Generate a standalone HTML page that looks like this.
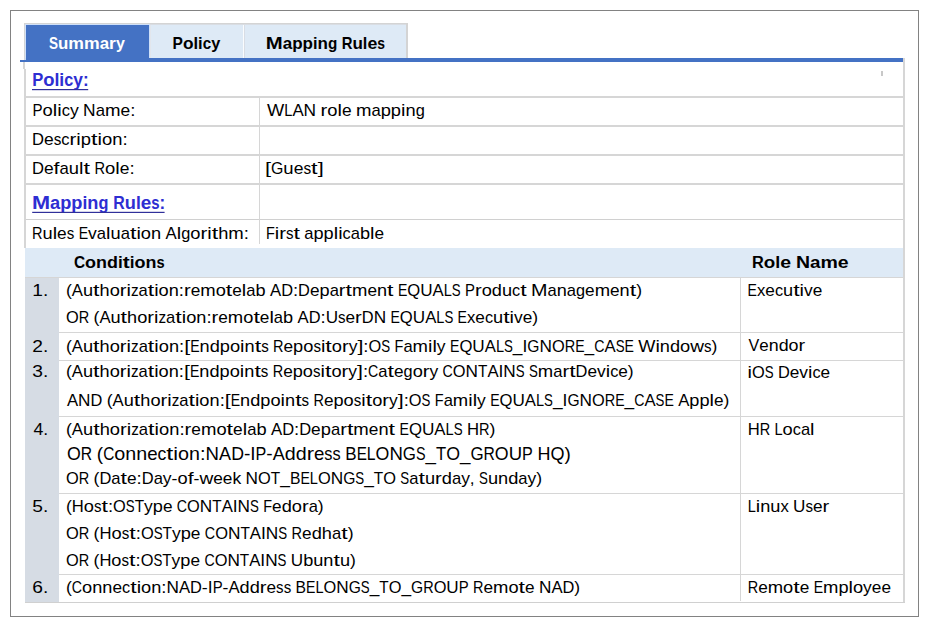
<!DOCTYPE html>
<html><head><meta charset="utf-8"><style>
html,body{margin:0;padding:0;background:#fff;width:927px;height:625px;overflow:hidden}
svg{display:block}
text{font-family:"Liberation Sans",sans-serif;white-space:pre}
</style></head><body>
<svg width="927" height="625" viewBox="0 0 927 625">
<g shape-rendering="crispEdges">
<rect x="10" y="10" width="909" height="1" fill="#828282"/>
<rect x="10" y="616" width="909" height="1" fill="#828282"/>
<rect x="10" y="10" width="1" height="607" fill="#828282"/>
<rect x="918" y="10" width="1" height="607" fill="#828282"/>
<rect x="24" y="23" width="384" height="1" fill="#D4D4D4"/>
<rect x="24" y="23" width="1" height="35" fill="#D4D4D4"/>
<rect x="406" y="23" width="2" height="35" fill="#D4D4D4"/>
<rect x="25" y="24" width="125" height="34" fill="#CFE0F8"/>
<rect x="26" y="25" width="123" height="33" fill="#4472C4"/>
<rect x="150" y="24" width="2" height="34" fill="#E2E6EC"/>
<rect x="151" y="24" width="255" height="34" fill="#DEEAF6"/>
<rect x="150" y="24" width="256" height="1" fill="#D9DDE3"/>
<rect x="243" y="25" width="1" height="33" fill="#FAFCFE"/>
<rect x="244" y="25" width="1" height="33" fill="#D8DDE5"/>
<rect x="26" y="58" width="877" height="4" fill="#4472C4"/>
<rect x="24" y="58" width="1" height="2" fill="#D0D4DC"/>
<rect x="25" y="58" width="1" height="2" fill="#C8DAF6"/>
<rect x="20" y="60" width="6" height="2" fill="#4472C4"/>
<rect x="23" y="62" width="2" height="7" fill="#D6D6D6"/>
<rect x="24" y="69" width="2" height="179" fill="#D6D6D6"/>
<rect x="903" y="58" width="2" height="545" fill="#D6D6D6"/>
<rect x="26" y="96" width="877" height="2" fill="#D6D6D6"/>
<rect x="26" y="125" width="877" height="2" fill="#D6D6D6"/>
<rect x="26" y="154" width="877" height="2" fill="#D6D6D6"/>
<rect x="26" y="183" width="877" height="2" fill="#D6D6D6"/>
<rect x="26" y="219" width="877" height="1" fill="#D0D0D0"/>
<rect x="259" y="98" width="1" height="146" fill="#D6D6D6"/>
<rect x="25" y="248" width="878" height="29" fill="#DEEAF6"/>
<rect x="25" y="277" width="878" height="1" fill="#D6D6D6"/>
<rect x="25" y="278" width="34" height="324" fill="#D6DCE4"/>
<rect x="59" y="332" width="844" height="1" fill="#D6D6D6"/>
<rect x="59" y="360" width="844" height="1" fill="#D6D6D6"/>
<rect x="59" y="416" width="844" height="1" fill="#D6D6D6"/>
<rect x="59" y="493" width="844" height="1" fill="#D6D6D6"/>
<rect x="59" y="574" width="844" height="1" fill="#D6D6D6"/>
<rect x="25" y="602" width="880" height="1" fill="#D0D0D0"/>
<rect x="740" y="278" width="1" height="323" fill="#D6D6D6"/>
<rect x="881" y="71" width="2" height="5" fill="#C8C8C8"/>
</g>
<g id="tab1" font-size="16.4" font-weight="bold" fill="#FFFFFF"><text x="48.99" y="48.50" textLength="9.02" lengthAdjust="spacingAndGlyphs">S</text><text x="58.01" y="48.50" textLength="10.31" lengthAdjust="spacingAndGlyphs">u</text><text x="68.32" y="48.50" textLength="15.68" lengthAdjust="spacingAndGlyphs">m</text><text x="84.00" y="48.50" textLength="15.68" lengthAdjust="spacingAndGlyphs">m</text><text x="99.68" y="48.50" textLength="9.40" lengthAdjust="spacingAndGlyphs">a</text><text x="109.08" y="48.50" textLength="6.84" lengthAdjust="spacingAndGlyphs">r</text><text x="115.92" y="48.50" textLength="8.88" lengthAdjust="spacingAndGlyphs">y</text></g>
<g id="tab2" font-size="16.4" font-weight="bold" fill="#000000"><text x="172.56" y="48.50" textLength="10.35" lengthAdjust="spacingAndGlyphs">P</text><text x="182.91" y="48.50" textLength="10.57" lengthAdjust="spacingAndGlyphs">o</text><text x="193.47" y="48.50" textLength="4.60" lengthAdjust="spacingAndGlyphs">l</text><text x="198.07" y="48.50" textLength="4.60" lengthAdjust="spacingAndGlyphs">i</text><text x="202.67" y="48.50" textLength="8.47" lengthAdjust="spacingAndGlyphs">c</text><text x="211.14" y="48.50" textLength="9.07" lengthAdjust="spacingAndGlyphs">y</text></g>
<g id="tab3" font-size="16.4" font-weight="bold" fill="#000000"><text x="265.77" y="48.50" textLength="16.93" lengthAdjust="spacingAndGlyphs">M</text><text x="282.70" y="48.50" textLength="9.48" lengthAdjust="spacingAndGlyphs">a</text><text x="292.18" y="48.50" textLength="10.40" lengthAdjust="spacingAndGlyphs">p</text><text x="302.58" y="48.50" textLength="10.40" lengthAdjust="spacingAndGlyphs">p</text><text x="312.98" y="48.50" textLength="4.54" lengthAdjust="spacingAndGlyphs">i</text><text x="317.53" y="48.50" textLength="10.40" lengthAdjust="spacingAndGlyphs">n</text><text x="327.93" y="48.50" textLength="9.32" lengthAdjust="spacingAndGlyphs">g</text><text x="341.72" y="48.50" textLength="10.75" lengthAdjust="spacingAndGlyphs">R</text><text x="352.47" y="48.50" textLength="10.40" lengthAdjust="spacingAndGlyphs">u</text><text x="362.87" y="48.50" textLength="4.54" lengthAdjust="spacingAndGlyphs">l</text><text x="367.41" y="48.50" textLength="9.85" lengthAdjust="spacingAndGlyphs">e</text><text x="377.26" y="48.50" textLength="7.74" lengthAdjust="spacingAndGlyphs">s</text></g>
<g id="h_policy" font-size="18.0" font-weight="bold" fill="#2E2ED2"><text x="32.14" y="85.50" textLength="11.03" lengthAdjust="spacingAndGlyphs">P</text><text x="43.18" y="85.50" textLength="11.26" lengthAdjust="spacingAndGlyphs">o</text><text x="54.44" y="85.50" textLength="4.90" lengthAdjust="spacingAndGlyphs">l</text><text x="59.34" y="85.50" textLength="4.90" lengthAdjust="spacingAndGlyphs">i</text><text x="64.24" y="85.50" textLength="9.03" lengthAdjust="spacingAndGlyphs">c</text><text x="73.27" y="85.50" textLength="9.67" lengthAdjust="spacingAndGlyphs">y</text><text x="82.94" y="85.50" textLength="5.72" lengthAdjust="spacingAndGlyphs">:</text></g>
<rect x="32.0" y="89.0" width="56.2" height="1.2" fill="#30309A"/>
<g id="pn" font-size="17" fill="#000000"><text x="32.47" y="116.00" textLength="10.05" lengthAdjust="spacingAndGlyphs">P</text><text x="42.52" y="116.00" textLength="10.26" lengthAdjust="spacingAndGlyphs">o</text><text x="52.78" y="116.00" textLength="4.46" lengthAdjust="spacingAndGlyphs">l</text><text x="57.24" y="116.00" textLength="4.46" lengthAdjust="spacingAndGlyphs">i</text><text x="61.70" y="116.00" textLength="8.22" lengthAdjust="spacingAndGlyphs">c</text><text x="69.93" y="116.00" textLength="8.80" lengthAdjust="spacingAndGlyphs">y</text><text x="83.13" y="116.00" textLength="12.55" lengthAdjust="spacingAndGlyphs">N</text><text x="95.68" y="116.00" textLength="9.32" lengthAdjust="spacingAndGlyphs">a</text><text x="105.00" y="116.00" textLength="15.54" lengthAdjust="spacingAndGlyphs">m</text><text x="120.53" y="116.00" textLength="9.68" lengthAdjust="spacingAndGlyphs">e</text><text x="130.21" y="116.00" textLength="5.20" lengthAdjust="spacingAndGlyphs">:</text></g>
<g id="pn_v" font-size="17" fill="#000000"><text x="267.00" y="115.70" textLength="17.24" lengthAdjust="spacingAndGlyphs">W</text><text x="284.24" y="115.70" textLength="8.15" lengthAdjust="spacingAndGlyphs">L</text><text x="292.38" y="115.70" textLength="11.21" lengthAdjust="spacingAndGlyphs">A</text><text x="303.59" y="115.70" textLength="12.51" lengthAdjust="spacingAndGlyphs">N</text><text x="320.48" y="115.70" textLength="6.75" lengthAdjust="spacingAndGlyphs">r</text><text x="327.23" y="115.70" textLength="10.22" lengthAdjust="spacingAndGlyphs">o</text><text x="337.45" y="115.70" textLength="4.45" lengthAdjust="spacingAndGlyphs">l</text><text x="341.90" y="115.70" textLength="9.64" lengthAdjust="spacingAndGlyphs">e</text><text x="355.92" y="115.70" textLength="15.48" lengthAdjust="spacingAndGlyphs">m</text><text x="371.39" y="115.70" textLength="9.28" lengthAdjust="spacingAndGlyphs">a</text><text x="380.67" y="115.70" textLength="10.18" lengthAdjust="spacingAndGlyphs">p</text><text x="390.85" y="115.70" textLength="10.18" lengthAdjust="spacingAndGlyphs">p</text><text x="401.03" y="115.70" textLength="4.45" lengthAdjust="spacingAndGlyphs">i</text><text x="405.48" y="115.70" textLength="10.18" lengthAdjust="spacingAndGlyphs">n</text><text x="415.66" y="115.70" textLength="9.12" lengthAdjust="spacingAndGlyphs">g</text></g>
<g id="desc" font-size="17" fill="#000000"><text x="31.98" y="145.30" textLength="11.97" lengthAdjust="spacingAndGlyphs">D</text><text x="43.95" y="145.30" textLength="9.68" lengthAdjust="spacingAndGlyphs">e</text><text x="53.64" y="145.30" textLength="7.61" lengthAdjust="spacingAndGlyphs">s</text><text x="61.25" y="145.30" textLength="8.23" lengthAdjust="spacingAndGlyphs">c</text><text x="69.48" y="145.30" textLength="6.79" lengthAdjust="spacingAndGlyphs">r</text><text x="76.26" y="145.30" textLength="4.47" lengthAdjust="spacingAndGlyphs">i</text><text x="80.73" y="145.30" textLength="10.23" lengthAdjust="spacingAndGlyphs">p</text><text x="90.96" y="145.30" textLength="6.52" lengthAdjust="spacingAndGlyphs">t</text><text x="97.48" y="145.30" textLength="4.47" lengthAdjust="spacingAndGlyphs">i</text><text x="101.94" y="145.30" textLength="10.26" lengthAdjust="spacingAndGlyphs">o</text><text x="112.21" y="145.30" textLength="10.23" lengthAdjust="spacingAndGlyphs">n</text><text x="122.43" y="145.30" textLength="5.21" lengthAdjust="spacingAndGlyphs">:</text></g>
<g id="dr" font-size="17" fill="#000000"><text x="31.96" y="174.00" textLength="11.97" lengthAdjust="spacingAndGlyphs">D</text><text x="43.93" y="174.00" textLength="9.68" lengthAdjust="spacingAndGlyphs">e</text><text x="53.61" y="174.00" textLength="5.94" lengthAdjust="spacingAndGlyphs">f</text><text x="59.54" y="174.00" textLength="9.32" lengthAdjust="spacingAndGlyphs">a</text><text x="68.86" y="174.00" textLength="10.22" lengthAdjust="spacingAndGlyphs">u</text><text x="79.08" y="174.00" textLength="4.46" lengthAdjust="spacingAndGlyphs">l</text><text x="83.55" y="174.00" textLength="6.52" lengthAdjust="spacingAndGlyphs">t</text><text x="94.46" y="174.00" textLength="10.56" lengthAdjust="spacingAndGlyphs">R</text><text x="105.02" y="174.00" textLength="10.26" lengthAdjust="spacingAndGlyphs">o</text><text x="115.28" y="174.00" textLength="4.46" lengthAdjust="spacingAndGlyphs">l</text><text x="119.74" y="174.00" textLength="9.68" lengthAdjust="spacingAndGlyphs">e</text><text x="129.42" y="174.00" textLength="5.20" lengthAdjust="spacingAndGlyphs">:</text></g>
<g id="dr_v" font-size="17" fill="#000000"><text x="264.97" y="174.00" textLength="6.05" lengthAdjust="spacingAndGlyphs">[</text><text x="271.02" y="174.00" textLength="12.37" lengthAdjust="spacingAndGlyphs">G</text><text x="283.39" y="174.00" textLength="10.30" lengthAdjust="spacingAndGlyphs">u</text><text x="293.69" y="174.00" textLength="9.76" lengthAdjust="spacingAndGlyphs">e</text><text x="303.45" y="174.00" textLength="7.67" lengthAdjust="spacingAndGlyphs">s</text><text x="311.12" y="174.00" textLength="6.57" lengthAdjust="spacingAndGlyphs">t</text><text x="317.68" y="174.00" textLength="6.05" lengthAdjust="spacingAndGlyphs">]</text></g>
<g id="h_map" font-size="18.0" font-weight="bold" fill="#2E2ED2"><text x="31.98" y="208.80" textLength="18.11" lengthAdjust="spacingAndGlyphs">M</text><text x="50.09" y="208.80" textLength="10.15" lengthAdjust="spacingAndGlyphs">a</text><text x="60.24" y="208.80" textLength="11.13" lengthAdjust="spacingAndGlyphs">p</text><text x="71.37" y="208.80" textLength="11.13" lengthAdjust="spacingAndGlyphs">p</text><text x="82.50" y="208.80" textLength="4.86" lengthAdjust="spacingAndGlyphs">i</text><text x="87.36" y="208.80" textLength="11.13" lengthAdjust="spacingAndGlyphs">n</text><text x="98.49" y="208.80" textLength="9.97" lengthAdjust="spacingAndGlyphs">g</text><text x="113.25" y="208.80" textLength="11.50" lengthAdjust="spacingAndGlyphs">R</text><text x="124.75" y="208.80" textLength="11.13" lengthAdjust="spacingAndGlyphs">u</text><text x="135.88" y="208.80" textLength="4.86" lengthAdjust="spacingAndGlyphs">l</text><text x="140.74" y="208.80" textLength="10.54" lengthAdjust="spacingAndGlyphs">e</text><text x="151.28" y="208.80" textLength="8.29" lengthAdjust="spacingAndGlyphs">s</text><text x="159.57" y="208.80" textLength="5.67" lengthAdjust="spacingAndGlyphs">:</text></g>
<rect x="32.2" y="211.8" width="132.4" height="1.2" fill="#30309A"/>
<g id="rea" font-size="17" fill="#000000"><text x="32.00" y="238.60" textLength="10.50" lengthAdjust="spacingAndGlyphs">R</text><text x="42.50" y="238.60" textLength="10.16" lengthAdjust="spacingAndGlyphs">u</text><text x="52.66" y="238.60" textLength="4.44" lengthAdjust="spacingAndGlyphs">l</text><text x="57.10" y="238.60" textLength="9.62" lengthAdjust="spacingAndGlyphs">e</text><text x="66.72" y="238.60" textLength="7.56" lengthAdjust="spacingAndGlyphs">s</text><text x="78.66" y="238.60" textLength="9.44" lengthAdjust="spacingAndGlyphs">E</text><text x="88.10" y="238.60" textLength="8.74" lengthAdjust="spacingAndGlyphs">v</text><text x="96.84" y="238.60" textLength="9.26" lengthAdjust="spacingAndGlyphs">a</text><text x="106.10" y="238.60" textLength="4.44" lengthAdjust="spacingAndGlyphs">l</text><text x="110.54" y="238.60" textLength="10.16" lengthAdjust="spacingAndGlyphs">u</text><text x="120.70" y="238.60" textLength="9.26" lengthAdjust="spacingAndGlyphs">a</text><text x="129.96" y="238.60" textLength="6.48" lengthAdjust="spacingAndGlyphs">t</text><text x="136.44" y="238.60" textLength="4.44" lengthAdjust="spacingAndGlyphs">i</text><text x="140.88" y="238.60" textLength="10.20" lengthAdjust="spacingAndGlyphs">o</text><text x="151.08" y="238.60" textLength="10.16" lengthAdjust="spacingAndGlyphs">n</text><text x="165.61" y="238.60" textLength="11.19" lengthAdjust="spacingAndGlyphs">A</text><text x="176.81" y="238.60" textLength="4.44" lengthAdjust="spacingAndGlyphs">l</text><text x="181.24" y="238.60" textLength="9.10" lengthAdjust="spacingAndGlyphs">g</text><text x="190.35" y="238.60" textLength="10.20" lengthAdjust="spacingAndGlyphs">o</text><text x="200.55" y="238.60" textLength="6.74" lengthAdjust="spacingAndGlyphs">r</text><text x="207.29" y="238.60" textLength="4.44" lengthAdjust="spacingAndGlyphs">i</text><text x="211.73" y="238.60" textLength="6.48" lengthAdjust="spacingAndGlyphs">t</text><text x="218.21" y="238.60" textLength="10.16" lengthAdjust="spacingAndGlyphs">h</text><text x="228.37" y="238.60" textLength="15.45" lengthAdjust="spacingAndGlyphs">m</text><text x="243.82" y="238.60" textLength="5.18" lengthAdjust="spacingAndGlyphs">:</text></g>
<g id="rea_v" font-size="17" fill="#000000"><text x="266.00" y="238.60" textLength="8.85" lengthAdjust="spacingAndGlyphs">F</text><text x="274.85" y="238.60" textLength="4.42" lengthAdjust="spacingAndGlyphs">i</text><text x="279.26" y="238.60" textLength="6.71" lengthAdjust="spacingAndGlyphs">r</text><text x="285.98" y="238.60" textLength="7.53" lengthAdjust="spacingAndGlyphs">s</text><text x="293.51" y="238.60" textLength="6.45" lengthAdjust="spacingAndGlyphs">t</text><text x="304.31" y="238.60" textLength="9.22" lengthAdjust="spacingAndGlyphs">a</text><text x="313.53" y="238.60" textLength="10.11" lengthAdjust="spacingAndGlyphs">p</text><text x="323.64" y="238.60" textLength="10.11" lengthAdjust="spacingAndGlyphs">p</text><text x="333.76" y="238.60" textLength="4.42" lengthAdjust="spacingAndGlyphs">l</text><text x="338.17" y="238.60" textLength="4.42" lengthAdjust="spacingAndGlyphs">i</text><text x="342.59" y="238.60" textLength="8.14" lengthAdjust="spacingAndGlyphs">c</text><text x="350.73" y="238.60" textLength="9.22" lengthAdjust="spacingAndGlyphs">a</text><text x="359.96" y="238.60" textLength="10.11" lengthAdjust="spacingAndGlyphs">b</text><text x="370.07" y="238.60" textLength="4.42" lengthAdjust="spacingAndGlyphs">l</text><text x="374.49" y="238.60" textLength="9.58" lengthAdjust="spacingAndGlyphs">e</text></g>
<g id="h_cond" font-size="17.4" font-weight="bold" fill="#000000"><text x="73.99" y="267.70" textLength="11.11" lengthAdjust="spacingAndGlyphs">C</text><text x="85.10" y="267.70" textLength="10.99" lengthAdjust="spacingAndGlyphs">o</text><text x="96.09" y="267.70" textLength="10.95" lengthAdjust="spacingAndGlyphs">n</text><text x="107.04" y="267.70" textLength="10.95" lengthAdjust="spacingAndGlyphs">d</text><text x="117.98" y="267.70" textLength="4.78" lengthAdjust="spacingAndGlyphs">i</text><text x="122.76" y="267.70" textLength="6.98" lengthAdjust="spacingAndGlyphs">t</text><text x="129.74" y="267.70" textLength="4.78" lengthAdjust="spacingAndGlyphs">i</text><text x="134.53" y="267.70" textLength="10.99" lengthAdjust="spacingAndGlyphs">o</text><text x="145.51" y="267.70" textLength="10.95" lengthAdjust="spacingAndGlyphs">n</text><text x="156.46" y="267.70" textLength="8.15" lengthAdjust="spacingAndGlyphs">s</text></g>
<g id="h_role" font-size="17.4" font-weight="bold" fill="#000000"><text x="751.96" y="267.70" textLength="11.81" lengthAdjust="spacingAndGlyphs">R</text><text x="763.77" y="267.70" textLength="11.47" lengthAdjust="spacingAndGlyphs">o</text><text x="775.24" y="267.70" textLength="4.99" lengthAdjust="spacingAndGlyphs">l</text><text x="780.23" y="267.70" textLength="10.82" lengthAdjust="spacingAndGlyphs">e</text><text x="795.97" y="267.70" textLength="14.04" lengthAdjust="spacingAndGlyphs">N</text><text x="810.01" y="267.70" textLength="10.42" lengthAdjust="spacingAndGlyphs">a</text><text x="820.43" y="267.70" textLength="17.37" lengthAdjust="spacingAndGlyphs">m</text><text x="837.80" y="267.70" textLength="10.82" lengthAdjust="spacingAndGlyphs">e</text></g>
<g id="n1" font-size="17" fill="#000000"><text x="32.28" y="296.00" textLength="10.69" lengthAdjust="spacingAndGlyphs">1</text><text x="42.97" y="296.00" textLength="5.32" lengthAdjust="spacingAndGlyphs">.</text></g>
<g id="n2" font-size="17" fill="#000000"><text x="32.33" y="351.50" textLength="10.69" lengthAdjust="spacingAndGlyphs">2</text><text x="43.01" y="351.50" textLength="5.32" lengthAdjust="spacingAndGlyphs">.</text></g>
<g id="n3" font-size="17" fill="#000000"><text x="32.33" y="377.30" textLength="10.69" lengthAdjust="spacingAndGlyphs">3</text><text x="43.01" y="377.30" textLength="5.32" lengthAdjust="spacingAndGlyphs">.</text></g>
<g id="n4" font-size="17" fill="#000000"><text x="33.42" y="434.50" textLength="9.86" lengthAdjust="spacingAndGlyphs">4</text><text x="43.28" y="434.50" textLength="4.91" lengthAdjust="spacingAndGlyphs">.</text></g>
<g id="n5" font-size="17" fill="#000000"><text x="32.28" y="512.00" textLength="10.69" lengthAdjust="spacingAndGlyphs">5</text><text x="42.96" y="512.00" textLength="5.32" lengthAdjust="spacingAndGlyphs">.</text></g>
<g id="n6" font-size="17" fill="#000000"><text x="32.33" y="592.60" textLength="10.69" lengthAdjust="spacingAndGlyphs">6</text><text x="43.01" y="592.60" textLength="5.32" lengthAdjust="spacingAndGlyphs">.</text></g>
<g id="c11" font-size="17" fill="#000000"><text x="66.00" y="296.00" textLength="5.84" lengthAdjust="spacingAndGlyphs">(</text><text x="71.84" y="296.00" textLength="11.14" lengthAdjust="spacingAndGlyphs">A</text><text x="82.98" y="296.00" textLength="10.11" lengthAdjust="spacingAndGlyphs">u</text><text x="93.09" y="296.00" textLength="6.45" lengthAdjust="spacingAndGlyphs">t</text><text x="99.54" y="296.00" textLength="10.11" lengthAdjust="spacingAndGlyphs">h</text><text x="109.65" y="296.00" textLength="10.15" lengthAdjust="spacingAndGlyphs">o</text><text x="119.80" y="296.00" textLength="6.71" lengthAdjust="spacingAndGlyphs">r</text><text x="126.51" y="296.00" textLength="4.42" lengthAdjust="spacingAndGlyphs">i</text><text x="130.93" y="296.00" textLength="7.60" lengthAdjust="spacingAndGlyphs">z</text><text x="138.54" y="296.00" textLength="9.22" lengthAdjust="spacingAndGlyphs">a</text><text x="147.76" y="296.00" textLength="6.45" lengthAdjust="spacingAndGlyphs">t</text><text x="154.20" y="296.00" textLength="4.42" lengthAdjust="spacingAndGlyphs">i</text><text x="158.62" y="296.00" textLength="10.15" lengthAdjust="spacingAndGlyphs">o</text><text x="168.77" y="296.00" textLength="10.11" lengthAdjust="spacingAndGlyphs">n</text><text x="178.89" y="296.00" textLength="5.15" lengthAdjust="spacingAndGlyphs">:</text><text x="184.04" y="296.00" textLength="6.71" lengthAdjust="spacingAndGlyphs">r</text><text x="190.75" y="296.00" textLength="9.58" lengthAdjust="spacingAndGlyphs">e</text><text x="200.33" y="296.00" textLength="15.38" lengthAdjust="spacingAndGlyphs">m</text><text x="215.71" y="296.00" textLength="10.15" lengthAdjust="spacingAndGlyphs">o</text><text x="225.86" y="296.00" textLength="6.45" lengthAdjust="spacingAndGlyphs">t</text><text x="232.30" y="296.00" textLength="9.58" lengthAdjust="spacingAndGlyphs">e</text><text x="241.88" y="296.00" textLength="4.42" lengthAdjust="spacingAndGlyphs">l</text><text x="246.30" y="296.00" textLength="9.22" lengthAdjust="spacingAndGlyphs">a</text><text x="255.52" y="296.00" textLength="10.11" lengthAdjust="spacingAndGlyphs">b</text><text x="269.99" y="296.00" textLength="11.14" lengthAdjust="spacingAndGlyphs">A</text><text x="281.13" y="296.00" textLength="11.84" lengthAdjust="spacingAndGlyphs">D</text><text x="292.97" y="296.00" textLength="5.15" lengthAdjust="spacingAndGlyphs">:</text><text x="298.12" y="296.00" textLength="11.84" lengthAdjust="spacingAndGlyphs">D</text><text x="309.96" y="296.00" textLength="9.58" lengthAdjust="spacingAndGlyphs">e</text><text x="319.54" y="296.00" textLength="10.11" lengthAdjust="spacingAndGlyphs">p</text><text x="329.65" y="296.00" textLength="9.22" lengthAdjust="spacingAndGlyphs">a</text><text x="338.88" y="296.00" textLength="6.71" lengthAdjust="spacingAndGlyphs">r</text><text x="345.59" y="296.00" textLength="6.45" lengthAdjust="spacingAndGlyphs">t</text><text x="352.03" y="296.00" textLength="15.38" lengthAdjust="spacingAndGlyphs">m</text><text x="367.41" y="296.00" textLength="9.58" lengthAdjust="spacingAndGlyphs">e</text><text x="376.99" y="296.00" textLength="10.11" lengthAdjust="spacingAndGlyphs">n</text><text x="387.10" y="296.00" textLength="6.45" lengthAdjust="spacingAndGlyphs">t</text><text x="397.90" y="296.00" textLength="9.40" lengthAdjust="spacingAndGlyphs">E</text><text x="407.30" y="296.00" textLength="12.95" lengthAdjust="spacingAndGlyphs">Q</text><text x="420.26" y="296.00" textLength="12.35" lengthAdjust="spacingAndGlyphs">U</text><text x="432.61" y="296.00" textLength="11.14" lengthAdjust="spacingAndGlyphs">A</text><text x="443.75" y="296.00" textLength="8.09" lengthAdjust="spacingAndGlyphs">L</text><text x="451.84" y="296.00" textLength="8.84" lengthAdjust="spacingAndGlyphs">S</text><text x="465.04" y="296.00" textLength="9.94" lengthAdjust="spacingAndGlyphs">P</text><text x="474.98" y="296.00" textLength="6.71" lengthAdjust="spacingAndGlyphs">r</text><text x="481.69" y="296.00" textLength="10.15" lengthAdjust="spacingAndGlyphs">o</text><text x="491.84" y="296.00" textLength="10.11" lengthAdjust="spacingAndGlyphs">d</text><text x="501.96" y="296.00" textLength="10.11" lengthAdjust="spacingAndGlyphs">u</text><text x="512.07" y="296.00" textLength="8.14" lengthAdjust="spacingAndGlyphs">c</text><text x="520.21" y="296.00" textLength="6.45" lengthAdjust="spacingAndGlyphs">t</text><text x="531.01" y="296.00" textLength="16.46" lengthAdjust="spacingAndGlyphs">M</text><text x="547.47" y="296.00" textLength="9.22" lengthAdjust="spacingAndGlyphs">a</text><text x="556.69" y="296.00" textLength="10.11" lengthAdjust="spacingAndGlyphs">n</text><text x="566.80" y="296.00" textLength="9.22" lengthAdjust="spacingAndGlyphs">a</text><text x="576.02" y="296.00" textLength="9.06" lengthAdjust="spacingAndGlyphs">g</text><text x="585.08" y="296.00" textLength="9.58" lengthAdjust="spacingAndGlyphs">e</text><text x="594.66" y="296.00" textLength="15.38" lengthAdjust="spacingAndGlyphs">m</text><text x="610.04" y="296.00" textLength="9.58" lengthAdjust="spacingAndGlyphs">e</text><text x="619.62" y="296.00" textLength="10.11" lengthAdjust="spacingAndGlyphs">n</text><text x="629.73" y="296.00" textLength="6.45" lengthAdjust="spacingAndGlyphs">t</text><text x="636.18" y="296.00" textLength="5.84" lengthAdjust="spacingAndGlyphs">)</text></g>
<g id="c12" font-size="17" fill="#000000"><text x="66.00" y="322.80" textLength="12.75" lengthAdjust="spacingAndGlyphs">O</text><text x="78.75" y="322.80" textLength="10.45" lengthAdjust="spacingAndGlyphs">R</text><text x="93.55" y="322.80" textLength="5.84" lengthAdjust="spacingAndGlyphs">(</text><text x="99.39" y="322.80" textLength="11.14" lengthAdjust="spacingAndGlyphs">A</text><text x="110.53" y="322.80" textLength="10.11" lengthAdjust="spacingAndGlyphs">u</text><text x="120.64" y="322.80" textLength="6.45" lengthAdjust="spacingAndGlyphs">t</text><text x="127.09" y="322.80" textLength="10.11" lengthAdjust="spacingAndGlyphs">h</text><text x="137.20" y="322.80" textLength="10.15" lengthAdjust="spacingAndGlyphs">o</text><text x="147.35" y="322.80" textLength="6.71" lengthAdjust="spacingAndGlyphs">r</text><text x="154.06" y="322.80" textLength="4.42" lengthAdjust="spacingAndGlyphs">i</text><text x="158.48" y="322.80" textLength="7.60" lengthAdjust="spacingAndGlyphs">z</text><text x="166.09" y="322.80" textLength="9.22" lengthAdjust="spacingAndGlyphs">a</text><text x="175.31" y="322.80" textLength="6.45" lengthAdjust="spacingAndGlyphs">t</text><text x="181.75" y="322.80" textLength="4.42" lengthAdjust="spacingAndGlyphs">i</text><text x="186.17" y="322.80" textLength="10.15" lengthAdjust="spacingAndGlyphs">o</text><text x="196.32" y="322.80" textLength="10.11" lengthAdjust="spacingAndGlyphs">n</text><text x="206.44" y="322.80" textLength="5.15" lengthAdjust="spacingAndGlyphs">:</text><text x="211.59" y="322.80" textLength="6.71" lengthAdjust="spacingAndGlyphs">r</text><text x="218.30" y="322.80" textLength="9.58" lengthAdjust="spacingAndGlyphs">e</text><text x="227.88" y="322.80" textLength="15.38" lengthAdjust="spacingAndGlyphs">m</text><text x="243.25" y="322.80" textLength="10.15" lengthAdjust="spacingAndGlyphs">o</text><text x="253.41" y="322.80" textLength="6.45" lengthAdjust="spacingAndGlyphs">t</text><text x="259.85" y="322.80" textLength="9.58" lengthAdjust="spacingAndGlyphs">e</text><text x="269.43" y="322.80" textLength="4.42" lengthAdjust="spacingAndGlyphs">l</text><text x="273.85" y="322.80" textLength="9.22" lengthAdjust="spacingAndGlyphs">a</text><text x="283.07" y="322.80" textLength="10.11" lengthAdjust="spacingAndGlyphs">b</text><text x="297.54" y="322.80" textLength="11.14" lengthAdjust="spacingAndGlyphs">A</text><text x="308.68" y="322.80" textLength="11.84" lengthAdjust="spacingAndGlyphs">D</text><text x="320.52" y="322.80" textLength="5.15" lengthAdjust="spacingAndGlyphs">:</text><text x="325.67" y="322.80" textLength="12.35" lengthAdjust="spacingAndGlyphs">U</text><text x="338.02" y="322.80" textLength="7.53" lengthAdjust="spacingAndGlyphs">s</text><text x="345.55" y="322.80" textLength="9.58" lengthAdjust="spacingAndGlyphs">e</text><text x="355.13" y="322.80" textLength="6.71" lengthAdjust="spacingAndGlyphs">r</text><text x="361.84" y="322.80" textLength="11.84" lengthAdjust="spacingAndGlyphs">D</text><text x="373.68" y="322.80" textLength="12.43" lengthAdjust="spacingAndGlyphs">N</text><text x="390.46" y="322.80" textLength="9.40" lengthAdjust="spacingAndGlyphs">E</text><text x="399.86" y="322.80" textLength="12.95" lengthAdjust="spacingAndGlyphs">Q</text><text x="412.81" y="322.80" textLength="12.35" lengthAdjust="spacingAndGlyphs">U</text><text x="425.16" y="322.80" textLength="11.14" lengthAdjust="spacingAndGlyphs">A</text><text x="436.30" y="322.80" textLength="8.09" lengthAdjust="spacingAndGlyphs">L</text><text x="444.39" y="322.80" textLength="8.84" lengthAdjust="spacingAndGlyphs">S</text><text x="457.59" y="322.80" textLength="9.40" lengthAdjust="spacingAndGlyphs">E</text><text x="466.99" y="322.80" textLength="8.34" lengthAdjust="spacingAndGlyphs">x</text><text x="475.33" y="322.80" textLength="9.58" lengthAdjust="spacingAndGlyphs">e</text><text x="484.91" y="322.80" textLength="8.14" lengthAdjust="spacingAndGlyphs">c</text><text x="493.05" y="322.80" textLength="10.11" lengthAdjust="spacingAndGlyphs">u</text><text x="503.16" y="322.80" textLength="6.45" lengthAdjust="spacingAndGlyphs">t</text><text x="509.61" y="322.80" textLength="4.42" lengthAdjust="spacingAndGlyphs">i</text><text x="514.03" y="322.80" textLength="8.69" lengthAdjust="spacingAndGlyphs">v</text><text x="522.72" y="322.80" textLength="9.58" lengthAdjust="spacingAndGlyphs">e</text><text x="532.30" y="322.80" textLength="5.84" lengthAdjust="spacingAndGlyphs">)</text></g>
<g id="c2" font-size="17" fill="#000000"><text x="66.00" y="351.50" textLength="5.85" lengthAdjust="spacingAndGlyphs">(</text><text x="71.84" y="351.50" textLength="11.16" lengthAdjust="spacingAndGlyphs">A</text><text x="83.00" y="351.50" textLength="10.13" lengthAdjust="spacingAndGlyphs">u</text><text x="93.13" y="351.50" textLength="6.46" lengthAdjust="spacingAndGlyphs">t</text><text x="99.59" y="351.50" textLength="10.13" lengthAdjust="spacingAndGlyphs">h</text><text x="109.72" y="351.50" textLength="10.17" lengthAdjust="spacingAndGlyphs">o</text><text x="119.88" y="351.50" textLength="6.72" lengthAdjust="spacingAndGlyphs">r</text><text x="126.61" y="351.50" textLength="4.42" lengthAdjust="spacingAndGlyphs">i</text><text x="131.03" y="351.50" textLength="7.62" lengthAdjust="spacingAndGlyphs">z</text><text x="138.65" y="351.50" textLength="9.24" lengthAdjust="spacingAndGlyphs">a</text><text x="147.88" y="351.50" textLength="6.46" lengthAdjust="spacingAndGlyphs">t</text><text x="154.34" y="351.50" textLength="4.42" lengthAdjust="spacingAndGlyphs">i</text><text x="158.76" y="351.50" textLength="10.17" lengthAdjust="spacingAndGlyphs">o</text><text x="168.93" y="351.50" textLength="10.13" lengthAdjust="spacingAndGlyphs">n</text><text x="179.06" y="351.50" textLength="5.16" lengthAdjust="spacingAndGlyphs">:</text><text x="184.22" y="351.50" textLength="5.95" lengthAdjust="spacingAndGlyphs">[</text><text x="190.17" y="351.50" textLength="9.41" lengthAdjust="spacingAndGlyphs">E</text><text x="199.58" y="351.50" textLength="10.13" lengthAdjust="spacingAndGlyphs">n</text><text x="209.71" y="351.50" textLength="10.13" lengthAdjust="spacingAndGlyphs">d</text><text x="219.84" y="351.50" textLength="10.13" lengthAdjust="spacingAndGlyphs">p</text><text x="229.97" y="351.50" textLength="10.17" lengthAdjust="spacingAndGlyphs">o</text><text x="240.14" y="351.50" textLength="4.42" lengthAdjust="spacingAndGlyphs">i</text><text x="244.56" y="351.50" textLength="10.13" lengthAdjust="spacingAndGlyphs">n</text><text x="254.69" y="351.50" textLength="6.46" lengthAdjust="spacingAndGlyphs">t</text><text x="261.15" y="351.50" textLength="7.54" lengthAdjust="spacingAndGlyphs">s</text><text x="273.05" y="351.50" textLength="10.47" lengthAdjust="spacingAndGlyphs">R</text><text x="283.52" y="351.50" textLength="9.59" lengthAdjust="spacingAndGlyphs">e</text><text x="293.11" y="351.50" textLength="10.13" lengthAdjust="spacingAndGlyphs">p</text><text x="303.24" y="351.50" textLength="10.17" lengthAdjust="spacingAndGlyphs">o</text><text x="313.41" y="351.50" textLength="7.54" lengthAdjust="spacingAndGlyphs">s</text><text x="320.95" y="351.50" textLength="4.42" lengthAdjust="spacingAndGlyphs">i</text><text x="325.37" y="351.50" textLength="6.46" lengthAdjust="spacingAndGlyphs">t</text><text x="331.83" y="351.50" textLength="10.17" lengthAdjust="spacingAndGlyphs">o</text><text x="342.00" y="351.50" textLength="6.72" lengthAdjust="spacingAndGlyphs">r</text><text x="348.72" y="351.50" textLength="8.73" lengthAdjust="spacingAndGlyphs">y</text><text x="357.44" y="351.50" textLength="5.95" lengthAdjust="spacingAndGlyphs">]</text><text x="363.39" y="351.50" textLength="5.16" lengthAdjust="spacingAndGlyphs">:</text><text x="368.55" y="351.50" textLength="12.77" lengthAdjust="spacingAndGlyphs">O</text><text x="381.32" y="351.50" textLength="8.86" lengthAdjust="spacingAndGlyphs">S</text><text x="394.54" y="351.50" textLength="8.86" lengthAdjust="spacingAndGlyphs">F</text><text x="403.39" y="351.50" textLength="9.24" lengthAdjust="spacingAndGlyphs">a</text><text x="412.63" y="351.50" textLength="15.40" lengthAdjust="spacingAndGlyphs">m</text><text x="428.03" y="351.50" textLength="4.42" lengthAdjust="spacingAndGlyphs">i</text><text x="432.46" y="351.50" textLength="4.42" lengthAdjust="spacingAndGlyphs">l</text><text x="436.88" y="351.50" textLength="8.73" lengthAdjust="spacingAndGlyphs">y</text><text x="449.96" y="351.50" textLength="9.41" lengthAdjust="spacingAndGlyphs">E</text><text x="459.38" y="351.50" textLength="12.97" lengthAdjust="spacingAndGlyphs">Q</text><text x="472.35" y="351.50" textLength="12.37" lengthAdjust="spacingAndGlyphs">U</text><text x="484.72" y="351.50" textLength="11.16" lengthAdjust="spacingAndGlyphs">A</text><text x="495.88" y="351.50" textLength="8.11" lengthAdjust="spacingAndGlyphs">L</text><text x="503.98" y="351.50" textLength="8.86" lengthAdjust="spacingAndGlyphs">S</text><text x="512.84" y="351.50" textLength="9.64" lengthAdjust="spacingAndGlyphs">_</text><text x="522.48" y="351.50" textLength="4.86" lengthAdjust="spacingAndGlyphs">I</text><text x="527.34" y="351.50" textLength="12.16" lengthAdjust="spacingAndGlyphs">G</text><text x="539.50" y="351.50" textLength="12.45" lengthAdjust="spacingAndGlyphs">N</text><text x="551.95" y="351.50" textLength="12.77" lengthAdjust="spacingAndGlyphs">O</text><text x="564.71" y="351.50" textLength="10.47" lengthAdjust="spacingAndGlyphs">R</text><text x="575.18" y="351.50" textLength="9.41" lengthAdjust="spacingAndGlyphs">E</text><text x="584.59" y="351.50" textLength="9.64" lengthAdjust="spacingAndGlyphs">_</text><text x="594.23" y="351.50" textLength="10.28" lengthAdjust="spacingAndGlyphs">C</text><text x="604.51" y="351.50" textLength="11.16" lengthAdjust="spacingAndGlyphs">A</text><text x="615.67" y="351.50" textLength="8.86" lengthAdjust="spacingAndGlyphs">S</text><text x="624.53" y="351.50" textLength="9.41" lengthAdjust="spacingAndGlyphs">E</text><text x="638.30" y="351.50" textLength="17.15" lengthAdjust="spacingAndGlyphs">W</text><text x="655.45" y="351.50" textLength="4.42" lengthAdjust="spacingAndGlyphs">i</text><text x="659.88" y="351.50" textLength="10.13" lengthAdjust="spacingAndGlyphs">n</text><text x="670.01" y="351.50" textLength="10.13" lengthAdjust="spacingAndGlyphs">d</text><text x="680.14" y="351.50" textLength="10.17" lengthAdjust="spacingAndGlyphs">o</text><text x="690.30" y="351.50" textLength="13.78" lengthAdjust="spacingAndGlyphs">w</text><text x="704.08" y="351.50" textLength="7.54" lengthAdjust="spacingAndGlyphs">s</text><text x="711.63" y="351.50" textLength="5.85" lengthAdjust="spacingAndGlyphs">)</text></g>
<g id="c31" font-size="17" fill="#000000"><text x="66.00" y="377.30" textLength="5.84" lengthAdjust="spacingAndGlyphs">(</text><text x="71.84" y="377.30" textLength="11.14" lengthAdjust="spacingAndGlyphs">A</text><text x="82.98" y="377.30" textLength="10.11" lengthAdjust="spacingAndGlyphs">u</text><text x="93.09" y="377.30" textLength="6.45" lengthAdjust="spacingAndGlyphs">t</text><text x="99.54" y="377.30" textLength="10.11" lengthAdjust="spacingAndGlyphs">h</text><text x="109.65" y="377.30" textLength="10.15" lengthAdjust="spacingAndGlyphs">o</text><text x="119.80" y="377.30" textLength="6.71" lengthAdjust="spacingAndGlyphs">r</text><text x="126.51" y="377.30" textLength="4.42" lengthAdjust="spacingAndGlyphs">i</text><text x="130.93" y="377.30" textLength="7.60" lengthAdjust="spacingAndGlyphs">z</text><text x="138.54" y="377.30" textLength="9.22" lengthAdjust="spacingAndGlyphs">a</text><text x="147.76" y="377.30" textLength="6.45" lengthAdjust="spacingAndGlyphs">t</text><text x="154.20" y="377.30" textLength="4.42" lengthAdjust="spacingAndGlyphs">i</text><text x="158.62" y="377.30" textLength="10.15" lengthAdjust="spacingAndGlyphs">o</text><text x="168.77" y="377.30" textLength="10.11" lengthAdjust="spacingAndGlyphs">n</text><text x="178.89" y="377.30" textLength="5.15" lengthAdjust="spacingAndGlyphs">:</text><text x="184.04" y="377.30" textLength="5.94" lengthAdjust="spacingAndGlyphs">[</text><text x="189.98" y="377.30" textLength="9.40" lengthAdjust="spacingAndGlyphs">E</text><text x="199.38" y="377.30" textLength="10.11" lengthAdjust="spacingAndGlyphs">n</text><text x="209.49" y="377.30" textLength="10.11" lengthAdjust="spacingAndGlyphs">d</text><text x="219.61" y="377.30" textLength="10.11" lengthAdjust="spacingAndGlyphs">p</text><text x="229.72" y="377.30" textLength="10.15" lengthAdjust="spacingAndGlyphs">o</text><text x="239.87" y="377.30" textLength="4.42" lengthAdjust="spacingAndGlyphs">i</text><text x="244.29" y="377.30" textLength="10.11" lengthAdjust="spacingAndGlyphs">n</text><text x="254.40" y="377.30" textLength="6.45" lengthAdjust="spacingAndGlyphs">t</text><text x="260.85" y="377.30" textLength="7.53" lengthAdjust="spacingAndGlyphs">s</text><text x="272.73" y="377.30" textLength="10.45" lengthAdjust="spacingAndGlyphs">R</text><text x="283.18" y="377.30" textLength="9.58" lengthAdjust="spacingAndGlyphs">e</text><text x="292.76" y="377.30" textLength="10.11" lengthAdjust="spacingAndGlyphs">p</text><text x="302.88" y="377.30" textLength="10.15" lengthAdjust="spacingAndGlyphs">o</text><text x="313.03" y="377.30" textLength="7.53" lengthAdjust="spacingAndGlyphs">s</text><text x="320.56" y="377.30" textLength="4.42" lengthAdjust="spacingAndGlyphs">i</text><text x="324.97" y="377.30" textLength="6.45" lengthAdjust="spacingAndGlyphs">t</text><text x="331.42" y="377.30" textLength="10.15" lengthAdjust="spacingAndGlyphs">o</text><text x="341.57" y="377.30" textLength="6.71" lengthAdjust="spacingAndGlyphs">r</text><text x="348.28" y="377.30" textLength="8.71" lengthAdjust="spacingAndGlyphs">y</text><text x="357.00" y="377.30" textLength="5.94" lengthAdjust="spacingAndGlyphs">]</text><text x="362.94" y="377.30" textLength="5.15" lengthAdjust="spacingAndGlyphs">:</text><text x="368.09" y="377.30" textLength="10.26" lengthAdjust="spacingAndGlyphs">C</text><text x="378.35" y="377.30" textLength="9.22" lengthAdjust="spacingAndGlyphs">a</text><text x="387.57" y="377.30" textLength="6.45" lengthAdjust="spacingAndGlyphs">t</text><text x="394.02" y="377.30" textLength="9.58" lengthAdjust="spacingAndGlyphs">e</text><text x="403.60" y="377.30" textLength="9.06" lengthAdjust="spacingAndGlyphs">g</text><text x="412.66" y="377.30" textLength="10.15" lengthAdjust="spacingAndGlyphs">o</text><text x="422.81" y="377.30" textLength="6.71" lengthAdjust="spacingAndGlyphs">r</text><text x="429.52" y="377.30" textLength="8.71" lengthAdjust="spacingAndGlyphs">y</text><text x="442.59" y="377.30" textLength="10.26" lengthAdjust="spacingAndGlyphs">C</text><text x="452.85" y="377.30" textLength="12.75" lengthAdjust="spacingAndGlyphs">O</text><text x="465.60" y="377.30" textLength="12.43" lengthAdjust="spacingAndGlyphs">N</text><text x="478.02" y="377.30" textLength="9.38" lengthAdjust="spacingAndGlyphs">T</text><text x="487.40" y="377.30" textLength="11.14" lengthAdjust="spacingAndGlyphs">A</text><text x="498.54" y="377.30" textLength="4.85" lengthAdjust="spacingAndGlyphs">I</text><text x="503.39" y="377.30" textLength="12.43" lengthAdjust="spacingAndGlyphs">N</text><text x="515.82" y="377.30" textLength="8.84" lengthAdjust="spacingAndGlyphs">S</text><text x="529.02" y="377.30" textLength="8.84" lengthAdjust="spacingAndGlyphs">S</text><text x="537.86" y="377.30" textLength="15.38" lengthAdjust="spacingAndGlyphs">m</text><text x="553.24" y="377.30" textLength="9.22" lengthAdjust="spacingAndGlyphs">a</text><text x="562.46" y="377.30" textLength="6.71" lengthAdjust="spacingAndGlyphs">r</text><text x="569.17" y="377.30" textLength="6.45" lengthAdjust="spacingAndGlyphs">t</text><text x="575.62" y="377.30" textLength="11.84" lengthAdjust="spacingAndGlyphs">D</text><text x="587.46" y="377.30" textLength="9.58" lengthAdjust="spacingAndGlyphs">e</text><text x="597.04" y="377.30" textLength="8.69" lengthAdjust="spacingAndGlyphs">v</text><text x="605.73" y="377.30" textLength="4.42" lengthAdjust="spacingAndGlyphs">i</text><text x="610.15" y="377.30" textLength="8.14" lengthAdjust="spacingAndGlyphs">c</text><text x="618.29" y="377.30" textLength="9.58" lengthAdjust="spacingAndGlyphs">e</text><text x="627.87" y="377.30" textLength="5.84" lengthAdjust="spacingAndGlyphs">)</text></g>
<g id="c32" font-size="17" fill="#000000"><text x="67.00" y="405.80" textLength="11.14" lengthAdjust="spacingAndGlyphs">A</text><text x="78.14" y="405.80" textLength="12.43" lengthAdjust="spacingAndGlyphs">N</text><text x="90.56" y="405.80" textLength="11.84" lengthAdjust="spacingAndGlyphs">D</text><text x="106.76" y="405.80" textLength="5.84" lengthAdjust="spacingAndGlyphs">(</text><text x="112.60" y="405.80" textLength="11.14" lengthAdjust="spacingAndGlyphs">A</text><text x="123.73" y="405.80" textLength="10.11" lengthAdjust="spacingAndGlyphs">u</text><text x="133.85" y="405.80" textLength="6.45" lengthAdjust="spacingAndGlyphs">t</text><text x="140.30" y="405.80" textLength="10.11" lengthAdjust="spacingAndGlyphs">h</text><text x="150.41" y="405.80" textLength="10.15" lengthAdjust="spacingAndGlyphs">o</text><text x="160.56" y="405.80" textLength="6.71" lengthAdjust="spacingAndGlyphs">r</text><text x="167.27" y="405.80" textLength="4.42" lengthAdjust="spacingAndGlyphs">i</text><text x="171.69" y="405.80" textLength="7.60" lengthAdjust="spacingAndGlyphs">z</text><text x="179.30" y="405.80" textLength="9.22" lengthAdjust="spacingAndGlyphs">a</text><text x="188.52" y="405.80" textLength="6.45" lengthAdjust="spacingAndGlyphs">t</text><text x="194.96" y="405.80" textLength="4.42" lengthAdjust="spacingAndGlyphs">i</text><text x="199.38" y="405.80" textLength="10.15" lengthAdjust="spacingAndGlyphs">o</text><text x="209.53" y="405.80" textLength="10.11" lengthAdjust="spacingAndGlyphs">n</text><text x="219.65" y="405.80" textLength="5.15" lengthAdjust="spacingAndGlyphs">:</text><text x="224.80" y="405.80" textLength="5.94" lengthAdjust="spacingAndGlyphs">[</text><text x="230.74" y="405.80" textLength="9.40" lengthAdjust="spacingAndGlyphs">E</text><text x="240.14" y="405.80" textLength="10.11" lengthAdjust="spacingAndGlyphs">n</text><text x="250.25" y="405.80" textLength="10.11" lengthAdjust="spacingAndGlyphs">d</text><text x="260.37" y="405.80" textLength="10.11" lengthAdjust="spacingAndGlyphs">p</text><text x="270.48" y="405.80" textLength="10.15" lengthAdjust="spacingAndGlyphs">o</text><text x="280.63" y="405.80" textLength="4.42" lengthAdjust="spacingAndGlyphs">i</text><text x="285.05" y="405.80" textLength="10.11" lengthAdjust="spacingAndGlyphs">n</text><text x="295.16" y="405.80" textLength="6.45" lengthAdjust="spacingAndGlyphs">t</text><text x="301.61" y="405.80" textLength="7.53" lengthAdjust="spacingAndGlyphs">s</text><text x="313.49" y="405.80" textLength="10.45" lengthAdjust="spacingAndGlyphs">R</text><text x="323.94" y="405.80" textLength="9.58" lengthAdjust="spacingAndGlyphs">e</text><text x="333.52" y="405.80" textLength="10.11" lengthAdjust="spacingAndGlyphs">p</text><text x="343.63" y="405.80" textLength="10.15" lengthAdjust="spacingAndGlyphs">o</text><text x="353.79" y="405.80" textLength="7.53" lengthAdjust="spacingAndGlyphs">s</text><text x="361.31" y="405.80" textLength="4.42" lengthAdjust="spacingAndGlyphs">i</text><text x="365.73" y="405.80" textLength="6.45" lengthAdjust="spacingAndGlyphs">t</text><text x="372.18" y="405.80" textLength="10.15" lengthAdjust="spacingAndGlyphs">o</text><text x="382.33" y="405.80" textLength="6.71" lengthAdjust="spacingAndGlyphs">r</text><text x="389.04" y="405.80" textLength="8.71" lengthAdjust="spacingAndGlyphs">y</text><text x="397.76" y="405.80" textLength="5.94" lengthAdjust="spacingAndGlyphs">]</text><text x="403.70" y="405.80" textLength="5.15" lengthAdjust="spacingAndGlyphs">:</text><text x="408.85" y="405.80" textLength="12.75" lengthAdjust="spacingAndGlyphs">O</text><text x="421.59" y="405.80" textLength="8.84" lengthAdjust="spacingAndGlyphs">S</text><text x="434.79" y="405.80" textLength="8.84" lengthAdjust="spacingAndGlyphs">F</text><text x="443.64" y="405.80" textLength="9.22" lengthAdjust="spacingAndGlyphs">a</text><text x="452.86" y="405.80" textLength="15.38" lengthAdjust="spacingAndGlyphs">m</text><text x="468.23" y="405.80" textLength="4.42" lengthAdjust="spacingAndGlyphs">i</text><text x="472.65" y="405.80" textLength="4.42" lengthAdjust="spacingAndGlyphs">l</text><text x="477.07" y="405.80" textLength="8.71" lengthAdjust="spacingAndGlyphs">y</text><text x="490.13" y="405.80" textLength="9.40" lengthAdjust="spacingAndGlyphs">E</text><text x="499.53" y="405.80" textLength="12.95" lengthAdjust="spacingAndGlyphs">Q</text><text x="512.49" y="405.80" textLength="12.35" lengthAdjust="spacingAndGlyphs">U</text><text x="524.84" y="405.80" textLength="11.14" lengthAdjust="spacingAndGlyphs">A</text><text x="535.98" y="405.80" textLength="8.09" lengthAdjust="spacingAndGlyphs">L</text><text x="544.07" y="405.80" textLength="8.84" lengthAdjust="spacingAndGlyphs">S</text><text x="552.91" y="405.80" textLength="9.63" lengthAdjust="spacingAndGlyphs">_</text><text x="562.54" y="405.80" textLength="4.85" lengthAdjust="spacingAndGlyphs">I</text><text x="567.39" y="405.80" textLength="12.14" lengthAdjust="spacingAndGlyphs">G</text><text x="579.53" y="405.80" textLength="12.43" lengthAdjust="spacingAndGlyphs">N</text><text x="591.96" y="405.80" textLength="12.75" lengthAdjust="spacingAndGlyphs">O</text><text x="604.70" y="405.80" textLength="10.45" lengthAdjust="spacingAndGlyphs">R</text><text x="615.16" y="405.80" textLength="9.40" lengthAdjust="spacingAndGlyphs">E</text><text x="624.56" y="405.80" textLength="9.63" lengthAdjust="spacingAndGlyphs">_</text><text x="634.18" y="405.80" textLength="10.26" lengthAdjust="spacingAndGlyphs">C</text><text x="644.44" y="405.80" textLength="11.14" lengthAdjust="spacingAndGlyphs">A</text><text x="655.58" y="405.80" textLength="8.84" lengthAdjust="spacingAndGlyphs">S</text><text x="664.43" y="405.80" textLength="9.40" lengthAdjust="spacingAndGlyphs">E</text><text x="678.18" y="405.80" textLength="11.14" lengthAdjust="spacingAndGlyphs">A</text><text x="689.32" y="405.80" textLength="10.11" lengthAdjust="spacingAndGlyphs">p</text><text x="699.43" y="405.80" textLength="10.11" lengthAdjust="spacingAndGlyphs">p</text><text x="709.55" y="405.80" textLength="4.42" lengthAdjust="spacingAndGlyphs">l</text><text x="713.96" y="405.80" textLength="9.58" lengthAdjust="spacingAndGlyphs">e</text><text x="723.54" y="405.80" textLength="5.84" lengthAdjust="spacingAndGlyphs">)</text></g>
<g id="c41" font-size="17" fill="#000000"><text x="66.00" y="434.50" textLength="5.86" lengthAdjust="spacingAndGlyphs">(</text><text x="71.86" y="434.50" textLength="11.19" lengthAdjust="spacingAndGlyphs">A</text><text x="83.05" y="434.50" textLength="10.16" lengthAdjust="spacingAndGlyphs">u</text><text x="93.21" y="434.50" textLength="6.48" lengthAdjust="spacingAndGlyphs">t</text><text x="99.69" y="434.50" textLength="10.16" lengthAdjust="spacingAndGlyphs">h</text><text x="109.85" y="434.50" textLength="10.20" lengthAdjust="spacingAndGlyphs">o</text><text x="120.05" y="434.50" textLength="6.74" lengthAdjust="spacingAndGlyphs">r</text><text x="126.79" y="434.50" textLength="4.44" lengthAdjust="spacingAndGlyphs">i</text><text x="131.23" y="434.50" textLength="7.64" lengthAdjust="spacingAndGlyphs">z</text><text x="138.87" y="434.50" textLength="9.26" lengthAdjust="spacingAndGlyphs">a</text><text x="148.14" y="434.50" textLength="6.48" lengthAdjust="spacingAndGlyphs">t</text><text x="154.61" y="434.50" textLength="4.44" lengthAdjust="spacingAndGlyphs">i</text><text x="159.05" y="434.50" textLength="10.20" lengthAdjust="spacingAndGlyphs">o</text><text x="169.25" y="434.50" textLength="10.16" lengthAdjust="spacingAndGlyphs">n</text><text x="179.41" y="434.50" textLength="5.18" lengthAdjust="spacingAndGlyphs">:</text><text x="184.59" y="434.50" textLength="6.74" lengthAdjust="spacingAndGlyphs">r</text><text x="191.33" y="434.50" textLength="9.62" lengthAdjust="spacingAndGlyphs">e</text><text x="200.96" y="434.50" textLength="15.45" lengthAdjust="spacingAndGlyphs">m</text><text x="216.40" y="434.50" textLength="10.20" lengthAdjust="spacingAndGlyphs">o</text><text x="226.60" y="434.50" textLength="6.48" lengthAdjust="spacingAndGlyphs">t</text><text x="233.08" y="434.50" textLength="9.62" lengthAdjust="spacingAndGlyphs">e</text><text x="242.71" y="434.50" textLength="4.44" lengthAdjust="spacingAndGlyphs">l</text><text x="247.14" y="434.50" textLength="9.26" lengthAdjust="spacingAndGlyphs">a</text><text x="256.41" y="434.50" textLength="10.16" lengthAdjust="spacingAndGlyphs">b</text><text x="270.94" y="434.50" textLength="11.19" lengthAdjust="spacingAndGlyphs">A</text><text x="282.13" y="434.50" textLength="11.90" lengthAdjust="spacingAndGlyphs">D</text><text x="294.03" y="434.50" textLength="5.18" lengthAdjust="spacingAndGlyphs">:</text><text x="299.21" y="434.50" textLength="11.90" lengthAdjust="spacingAndGlyphs">D</text><text x="311.11" y="434.50" textLength="9.62" lengthAdjust="spacingAndGlyphs">e</text><text x="320.73" y="434.50" textLength="10.16" lengthAdjust="spacingAndGlyphs">p</text><text x="330.89" y="434.50" textLength="9.26" lengthAdjust="spacingAndGlyphs">a</text><text x="340.15" y="434.50" textLength="6.74" lengthAdjust="spacingAndGlyphs">r</text><text x="346.90" y="434.50" textLength="6.48" lengthAdjust="spacingAndGlyphs">t</text><text x="353.38" y="434.50" textLength="15.45" lengthAdjust="spacingAndGlyphs">m</text><text x="368.83" y="434.50" textLength="9.62" lengthAdjust="spacingAndGlyphs">e</text><text x="378.45" y="434.50" textLength="10.16" lengthAdjust="spacingAndGlyphs">n</text><text x="388.61" y="434.50" textLength="6.48" lengthAdjust="spacingAndGlyphs">t</text><text x="399.46" y="434.50" textLength="9.44" lengthAdjust="spacingAndGlyphs">E</text><text x="408.91" y="434.50" textLength="13.01" lengthAdjust="spacingAndGlyphs">Q</text><text x="421.92" y="434.50" textLength="12.41" lengthAdjust="spacingAndGlyphs">U</text><text x="434.33" y="434.50" textLength="11.19" lengthAdjust="spacingAndGlyphs">A</text><text x="445.52" y="434.50" textLength="8.13" lengthAdjust="spacingAndGlyphs">L</text><text x="453.65" y="434.50" textLength="8.89" lengthAdjust="spacingAndGlyphs">S</text><text x="466.91" y="434.50" textLength="12.05" lengthAdjust="spacingAndGlyphs">H</text><text x="478.96" y="434.50" textLength="10.50" lengthAdjust="spacingAndGlyphs">R</text><text x="489.46" y="434.50" textLength="5.86" lengthAdjust="spacingAndGlyphs">)</text></g>
<g id="c42" font-size="18.5" fill="#000000"><text x="67.00" y="460.00" textLength="13.80" lengthAdjust="spacingAndGlyphs">O</text><text x="80.80" y="460.00" textLength="11.32" lengthAdjust="spacingAndGlyphs">R</text><text x="96.83" y="460.00" textLength="6.32" lengthAdjust="spacingAndGlyphs">(</text><text x="103.15" y="460.00" textLength="11.11" lengthAdjust="spacingAndGlyphs">C</text><text x="114.26" y="460.00" textLength="10.99" lengthAdjust="spacingAndGlyphs">o</text><text x="125.25" y="460.00" textLength="10.95" lengthAdjust="spacingAndGlyphs">n</text><text x="136.20" y="460.00" textLength="10.95" lengthAdjust="spacingAndGlyphs">n</text><text x="147.15" y="460.00" textLength="10.37" lengthAdjust="spacingAndGlyphs">e</text><text x="157.52" y="460.00" textLength="8.81" lengthAdjust="spacingAndGlyphs">c</text><text x="166.33" y="460.00" textLength="6.98" lengthAdjust="spacingAndGlyphs">t</text><text x="173.31" y="460.00" textLength="4.78" lengthAdjust="spacingAndGlyphs">i</text><text x="178.10" y="460.00" textLength="10.99" lengthAdjust="spacingAndGlyphs">o</text><text x="189.09" y="460.00" textLength="10.95" lengthAdjust="spacingAndGlyphs">n</text><text x="200.04" y="460.00" textLength="5.58" lengthAdjust="spacingAndGlyphs">:</text><text x="205.61" y="460.00" textLength="13.45" lengthAdjust="spacingAndGlyphs">N</text><text x="219.07" y="460.00" textLength="12.06" lengthAdjust="spacingAndGlyphs">A</text><text x="231.13" y="460.00" textLength="12.82" lengthAdjust="spacingAndGlyphs">D</text><text x="243.95" y="460.00" textLength="6.38" lengthAdjust="spacingAndGlyphs">-</text><text x="250.33" y="460.00" textLength="5.25" lengthAdjust="spacingAndGlyphs">I</text><text x="255.58" y="460.00" textLength="10.77" lengthAdjust="spacingAndGlyphs">P</text><text x="266.35" y="460.00" textLength="6.38" lengthAdjust="spacingAndGlyphs">-</text><text x="272.73" y="460.00" textLength="12.06" lengthAdjust="spacingAndGlyphs">A</text><text x="284.79" y="460.00" textLength="10.95" lengthAdjust="spacingAndGlyphs">d</text><text x="295.74" y="460.00" textLength="10.95" lengthAdjust="spacingAndGlyphs">d</text><text x="306.69" y="460.00" textLength="7.27" lengthAdjust="spacingAndGlyphs">r</text><text x="313.95" y="460.00" textLength="10.37" lengthAdjust="spacingAndGlyphs">e</text><text x="324.32" y="460.00" textLength="8.15" lengthAdjust="spacingAndGlyphs">s</text><text x="332.47" y="460.00" textLength="8.15" lengthAdjust="spacingAndGlyphs">s</text><text x="345.34" y="460.00" textLength="11.34" lengthAdjust="spacingAndGlyphs">B</text><text x="356.67" y="460.00" textLength="10.18" lengthAdjust="spacingAndGlyphs">E</text><text x="366.85" y="460.00" textLength="8.76" lengthAdjust="spacingAndGlyphs">L</text><text x="375.61" y="460.00" textLength="13.80" lengthAdjust="spacingAndGlyphs">O</text><text x="389.41" y="460.00" textLength="13.45" lengthAdjust="spacingAndGlyphs">N</text><text x="402.87" y="460.00" textLength="13.15" lengthAdjust="spacingAndGlyphs">G</text><text x="416.01" y="460.00" textLength="9.58" lengthAdjust="spacingAndGlyphs">S</text><text x="425.59" y="460.00" textLength="10.42" lengthAdjust="spacingAndGlyphs">_</text><text x="436.01" y="460.00" textLength="10.16" lengthAdjust="spacingAndGlyphs">T</text><text x="446.17" y="460.00" textLength="13.80" lengthAdjust="spacingAndGlyphs">O</text><text x="459.97" y="460.00" textLength="10.42" lengthAdjust="spacingAndGlyphs">_</text><text x="470.39" y="460.00" textLength="13.15" lengthAdjust="spacingAndGlyphs">G</text><text x="483.53" y="460.00" textLength="11.32" lengthAdjust="spacingAndGlyphs">R</text><text x="494.85" y="460.00" textLength="13.80" lengthAdjust="spacingAndGlyphs">O</text><text x="508.65" y="460.00" textLength="13.37" lengthAdjust="spacingAndGlyphs">U</text><text x="522.02" y="460.00" textLength="10.77" lengthAdjust="spacingAndGlyphs">P</text><text x="537.50" y="460.00" textLength="12.99" lengthAdjust="spacingAndGlyphs">H</text><text x="550.49" y="460.00" textLength="14.02" lengthAdjust="spacingAndGlyphs">Q</text><text x="564.51" y="460.00" textLength="6.32" lengthAdjust="spacingAndGlyphs">)</text></g>
<g id="c43" font-size="17" fill="#000000"><text x="66.00" y="483.80" textLength="12.77" lengthAdjust="spacingAndGlyphs">O</text><text x="78.77" y="483.80" textLength="10.47" lengthAdjust="spacingAndGlyphs">R</text><text x="93.61" y="483.80" textLength="5.85" lengthAdjust="spacingAndGlyphs">(</text><text x="99.46" y="483.80" textLength="11.87" lengthAdjust="spacingAndGlyphs">D</text><text x="111.32" y="483.80" textLength="9.24" lengthAdjust="spacingAndGlyphs">a</text><text x="120.56" y="483.80" textLength="6.46" lengthAdjust="spacingAndGlyphs">t</text><text x="127.03" y="483.80" textLength="9.60" lengthAdjust="spacingAndGlyphs">e</text><text x="136.62" y="483.80" textLength="5.16" lengthAdjust="spacingAndGlyphs">:</text><text x="141.79" y="483.80" textLength="11.87" lengthAdjust="spacingAndGlyphs">D</text><text x="153.65" y="483.80" textLength="9.24" lengthAdjust="spacingAndGlyphs">a</text><text x="162.89" y="483.80" textLength="8.73" lengthAdjust="spacingAndGlyphs">y</text><text x="171.63" y="483.80" textLength="5.91" lengthAdjust="spacingAndGlyphs">-</text><text x="177.53" y="483.80" textLength="10.17" lengthAdjust="spacingAndGlyphs">o</text><text x="187.71" y="483.80" textLength="5.89" lengthAdjust="spacingAndGlyphs">f</text><text x="193.59" y="483.80" textLength="5.91" lengthAdjust="spacingAndGlyphs">-</text><text x="199.50" y="483.80" textLength="13.79" lengthAdjust="spacingAndGlyphs">w</text><text x="213.29" y="483.80" textLength="9.60" lengthAdjust="spacingAndGlyphs">e</text><text x="222.89" y="483.80" textLength="9.60" lengthAdjust="spacingAndGlyphs">e</text><text x="232.48" y="483.80" textLength="8.77" lengthAdjust="spacingAndGlyphs">k</text><text x="245.62" y="483.80" textLength="12.45" lengthAdjust="spacingAndGlyphs">N</text><text x="258.07" y="483.80" textLength="12.77" lengthAdjust="spacingAndGlyphs">O</text><text x="270.84" y="483.80" textLength="9.40" lengthAdjust="spacingAndGlyphs">T</text><text x="280.24" y="483.80" textLength="9.65" lengthAdjust="spacingAndGlyphs">_</text><text x="289.89" y="483.80" textLength="10.49" lengthAdjust="spacingAndGlyphs">B</text><text x="300.38" y="483.80" textLength="9.42" lengthAdjust="spacingAndGlyphs">E</text><text x="309.80" y="483.80" textLength="8.11" lengthAdjust="spacingAndGlyphs">L</text><text x="317.91" y="483.80" textLength="12.77" lengthAdjust="spacingAndGlyphs">O</text><text x="330.68" y="483.80" textLength="12.45" lengthAdjust="spacingAndGlyphs">N</text><text x="343.13" y="483.80" textLength="12.17" lengthAdjust="spacingAndGlyphs">G</text><text x="355.30" y="483.80" textLength="8.86" lengthAdjust="spacingAndGlyphs">S</text><text x="364.17" y="483.80" textLength="9.65" lengthAdjust="spacingAndGlyphs">_</text><text x="373.81" y="483.80" textLength="9.40" lengthAdjust="spacingAndGlyphs">T</text><text x="383.21" y="483.80" textLength="12.77" lengthAdjust="spacingAndGlyphs">O</text><text x="400.35" y="483.80" textLength="8.86" lengthAdjust="spacingAndGlyphs">S</text><text x="409.21" y="483.80" textLength="9.24" lengthAdjust="spacingAndGlyphs">a</text><text x="418.45" y="483.80" textLength="6.46" lengthAdjust="spacingAndGlyphs">t</text><text x="424.91" y="483.80" textLength="10.14" lengthAdjust="spacingAndGlyphs">u</text><text x="435.05" y="483.80" textLength="6.73" lengthAdjust="spacingAndGlyphs">r</text><text x="441.77" y="483.80" textLength="10.14" lengthAdjust="spacingAndGlyphs">d</text><text x="451.91" y="483.80" textLength="9.24" lengthAdjust="spacingAndGlyphs">a</text><text x="461.15" y="483.80" textLength="8.73" lengthAdjust="spacingAndGlyphs">y</text><text x="469.88" y="483.80" textLength="4.81" lengthAdjust="spacingAndGlyphs">,</text><text x="479.05" y="483.80" textLength="8.86" lengthAdjust="spacingAndGlyphs">S</text><text x="487.92" y="483.80" textLength="10.14" lengthAdjust="spacingAndGlyphs">u</text><text x="498.05" y="483.80" textLength="10.14" lengthAdjust="spacingAndGlyphs">n</text><text x="508.19" y="483.80" textLength="10.14" lengthAdjust="spacingAndGlyphs">d</text><text x="518.32" y="483.80" textLength="9.24" lengthAdjust="spacingAndGlyphs">a</text><text x="527.56" y="483.80" textLength="8.73" lengthAdjust="spacingAndGlyphs">y</text><text x="536.30" y="483.80" textLength="5.85" lengthAdjust="spacingAndGlyphs">)</text></g>
<g id="c51" font-size="17" fill="#000000"><text x="66.00" y="512.00" textLength="5.84" lengthAdjust="spacingAndGlyphs">(</text><text x="71.84" y="512.00" textLength="11.99" lengthAdjust="spacingAndGlyphs">H</text><text x="83.83" y="512.00" textLength="10.15" lengthAdjust="spacingAndGlyphs">o</text><text x="93.98" y="512.00" textLength="7.53" lengthAdjust="spacingAndGlyphs">s</text><text x="101.51" y="512.00" textLength="6.45" lengthAdjust="spacingAndGlyphs">t</text><text x="107.96" y="512.00" textLength="5.15" lengthAdjust="spacingAndGlyphs">:</text><text x="113.11" y="512.00" textLength="12.75" lengthAdjust="spacingAndGlyphs">O</text><text x="125.86" y="512.00" textLength="8.84" lengthAdjust="spacingAndGlyphs">S</text><text x="134.70" y="512.00" textLength="9.38" lengthAdjust="spacingAndGlyphs">T</text><text x="144.08" y="512.00" textLength="8.71" lengthAdjust="spacingAndGlyphs">y</text><text x="152.80" y="512.00" textLength="10.11" lengthAdjust="spacingAndGlyphs">p</text><text x="162.91" y="512.00" textLength="9.58" lengthAdjust="spacingAndGlyphs">e</text><text x="176.84" y="512.00" textLength="10.26" lengthAdjust="spacingAndGlyphs">C</text><text x="187.10" y="512.00" textLength="12.75" lengthAdjust="spacingAndGlyphs">O</text><text x="199.85" y="512.00" textLength="12.43" lengthAdjust="spacingAndGlyphs">N</text><text x="212.28" y="512.00" textLength="9.38" lengthAdjust="spacingAndGlyphs">T</text><text x="221.66" y="512.00" textLength="11.14" lengthAdjust="spacingAndGlyphs">A</text><text x="232.79" y="512.00" textLength="4.85" lengthAdjust="spacingAndGlyphs">I</text><text x="237.64" y="512.00" textLength="12.43" lengthAdjust="spacingAndGlyphs">N</text><text x="250.07" y="512.00" textLength="8.84" lengthAdjust="spacingAndGlyphs">S</text><text x="263.27" y="512.00" textLength="8.84" lengthAdjust="spacingAndGlyphs">F</text><text x="272.11" y="512.00" textLength="9.58" lengthAdjust="spacingAndGlyphs">e</text><text x="281.69" y="512.00" textLength="10.11" lengthAdjust="spacingAndGlyphs">d</text><text x="291.80" y="512.00" textLength="10.15" lengthAdjust="spacingAndGlyphs">o</text><text x="301.96" y="512.00" textLength="6.71" lengthAdjust="spacingAndGlyphs">r</text><text x="308.67" y="512.00" textLength="9.22" lengthAdjust="spacingAndGlyphs">a</text><text x="317.89" y="512.00" textLength="5.84" lengthAdjust="spacingAndGlyphs">)</text></g>
<g id="c52" font-size="17" fill="#000000"><text x="66.00" y="539.30" textLength="12.79" lengthAdjust="spacingAndGlyphs">O</text><text x="78.79" y="539.30" textLength="10.49" lengthAdjust="spacingAndGlyphs">R</text><text x="93.64" y="539.30" textLength="5.86" lengthAdjust="spacingAndGlyphs">(</text><text x="99.50" y="539.30" textLength="12.04" lengthAdjust="spacingAndGlyphs">H</text><text x="111.54" y="539.30" textLength="10.19" lengthAdjust="spacingAndGlyphs">o</text><text x="121.72" y="539.30" textLength="7.56" lengthAdjust="spacingAndGlyphs">s</text><text x="129.28" y="539.30" textLength="6.47" lengthAdjust="spacingAndGlyphs">t</text><text x="135.75" y="539.30" textLength="5.17" lengthAdjust="spacingAndGlyphs">:</text><text x="140.92" y="539.30" textLength="12.79" lengthAdjust="spacingAndGlyphs">O</text><text x="153.71" y="539.30" textLength="8.88" lengthAdjust="spacingAndGlyphs">S</text><text x="162.58" y="539.30" textLength="9.41" lengthAdjust="spacingAndGlyphs">T</text><text x="172.00" y="539.30" textLength="8.74" lengthAdjust="spacingAndGlyphs">y</text><text x="180.74" y="539.30" textLength="10.15" lengthAdjust="spacingAndGlyphs">p</text><text x="190.89" y="539.30" textLength="9.61" lengthAdjust="spacingAndGlyphs">e</text><text x="204.87" y="539.30" textLength="10.30" lengthAdjust="spacingAndGlyphs">C</text><text x="215.17" y="539.30" textLength="12.79" lengthAdjust="spacingAndGlyphs">O</text><text x="227.96" y="539.30" textLength="12.47" lengthAdjust="spacingAndGlyphs">N</text><text x="240.43" y="539.30" textLength="9.41" lengthAdjust="spacingAndGlyphs">T</text><text x="249.84" y="539.30" textLength="11.18" lengthAdjust="spacingAndGlyphs">A</text><text x="261.02" y="539.30" textLength="4.87" lengthAdjust="spacingAndGlyphs">I</text><text x="265.89" y="539.30" textLength="12.47" lengthAdjust="spacingAndGlyphs">N</text><text x="278.36" y="539.30" textLength="8.88" lengthAdjust="spacingAndGlyphs">S</text><text x="291.60" y="539.30" textLength="10.49" lengthAdjust="spacingAndGlyphs">R</text><text x="302.09" y="539.30" textLength="9.61" lengthAdjust="spacingAndGlyphs">e</text><text x="311.70" y="539.30" textLength="10.15" lengthAdjust="spacingAndGlyphs">d</text><text x="321.85" y="539.30" textLength="10.15" lengthAdjust="spacingAndGlyphs">h</text><text x="332.00" y="539.30" textLength="9.25" lengthAdjust="spacingAndGlyphs">a</text><text x="341.25" y="539.30" textLength="6.47" lengthAdjust="spacingAndGlyphs">t</text><text x="347.72" y="539.30" textLength="5.86" lengthAdjust="spacingAndGlyphs">)</text></g>
<g id="c53" font-size="17" fill="#000000"><text x="66.00" y="565.80" textLength="12.75" lengthAdjust="spacingAndGlyphs">O</text><text x="78.75" y="565.80" textLength="10.45" lengthAdjust="spacingAndGlyphs">R</text><text x="93.55" y="565.80" textLength="5.84" lengthAdjust="spacingAndGlyphs">(</text><text x="99.39" y="565.80" textLength="11.99" lengthAdjust="spacingAndGlyphs">H</text><text x="111.38" y="565.80" textLength="10.15" lengthAdjust="spacingAndGlyphs">o</text><text x="121.53" y="565.80" textLength="7.53" lengthAdjust="spacingAndGlyphs">s</text><text x="129.06" y="565.80" textLength="6.45" lengthAdjust="spacingAndGlyphs">t</text><text x="135.51" y="565.80" textLength="5.15" lengthAdjust="spacingAndGlyphs">:</text><text x="140.66" y="565.80" textLength="12.75" lengthAdjust="spacingAndGlyphs">O</text><text x="153.41" y="565.80" textLength="8.84" lengthAdjust="spacingAndGlyphs">S</text><text x="162.25" y="565.80" textLength="9.38" lengthAdjust="spacingAndGlyphs">T</text><text x="171.63" y="565.80" textLength="8.71" lengthAdjust="spacingAndGlyphs">y</text><text x="180.34" y="565.80" textLength="10.11" lengthAdjust="spacingAndGlyphs">p</text><text x="190.46" y="565.80" textLength="9.58" lengthAdjust="spacingAndGlyphs">e</text><text x="204.39" y="565.80" textLength="10.26" lengthAdjust="spacingAndGlyphs">C</text><text x="214.65" y="565.80" textLength="12.75" lengthAdjust="spacingAndGlyphs">O</text><text x="227.40" y="565.80" textLength="12.43" lengthAdjust="spacingAndGlyphs">N</text><text x="239.82" y="565.80" textLength="9.38" lengthAdjust="spacingAndGlyphs">T</text><text x="249.20" y="565.80" textLength="11.14" lengthAdjust="spacingAndGlyphs">A</text><text x="260.34" y="565.80" textLength="4.85" lengthAdjust="spacingAndGlyphs">I</text><text x="265.19" y="565.80" textLength="12.43" lengthAdjust="spacingAndGlyphs">N</text><text x="277.62" y="565.80" textLength="8.84" lengthAdjust="spacingAndGlyphs">S</text><text x="290.82" y="565.80" textLength="12.35" lengthAdjust="spacingAndGlyphs">U</text><text x="303.17" y="565.80" textLength="10.11" lengthAdjust="spacingAndGlyphs">b</text><text x="313.28" y="565.80" textLength="10.11" lengthAdjust="spacingAndGlyphs">u</text><text x="323.39" y="565.80" textLength="10.11" lengthAdjust="spacingAndGlyphs">n</text><text x="333.51" y="565.80" textLength="6.45" lengthAdjust="spacingAndGlyphs">t</text><text x="339.96" y="565.80" textLength="10.11" lengthAdjust="spacingAndGlyphs">u</text><text x="350.07" y="565.80" textLength="5.84" lengthAdjust="spacingAndGlyphs">)</text></g>
<g id="c6" font-size="17" fill="#000000"><text x="66.00" y="592.60" textLength="5.84" lengthAdjust="spacingAndGlyphs">(</text><text x="71.84" y="592.60" textLength="10.26" lengthAdjust="spacingAndGlyphs">C</text><text x="82.10" y="592.60" textLength="10.15" lengthAdjust="spacingAndGlyphs">o</text><text x="92.25" y="592.60" textLength="10.11" lengthAdjust="spacingAndGlyphs">n</text><text x="102.37" y="592.60" textLength="10.11" lengthAdjust="spacingAndGlyphs">n</text><text x="112.48" y="592.60" textLength="9.58" lengthAdjust="spacingAndGlyphs">e</text><text x="122.06" y="592.60" textLength="8.14" lengthAdjust="spacingAndGlyphs">c</text><text x="130.20" y="592.60" textLength="6.45" lengthAdjust="spacingAndGlyphs">t</text><text x="136.65" y="592.60" textLength="4.42" lengthAdjust="spacingAndGlyphs">i</text><text x="141.06" y="592.60" textLength="10.15" lengthAdjust="spacingAndGlyphs">o</text><text x="151.22" y="592.60" textLength="10.11" lengthAdjust="spacingAndGlyphs">n</text><text x="161.33" y="592.60" textLength="5.15" lengthAdjust="spacingAndGlyphs">:</text><text x="166.48" y="592.60" textLength="12.43" lengthAdjust="spacingAndGlyphs">N</text><text x="178.91" y="592.60" textLength="11.14" lengthAdjust="spacingAndGlyphs">A</text><text x="190.04" y="592.60" textLength="11.84" lengthAdjust="spacingAndGlyphs">D</text><text x="201.89" y="592.60" textLength="5.89" lengthAdjust="spacingAndGlyphs">-</text><text x="207.78" y="592.60" textLength="4.85" lengthAdjust="spacingAndGlyphs">I</text><text x="212.63" y="592.60" textLength="9.94" lengthAdjust="spacingAndGlyphs">P</text><text x="222.58" y="592.60" textLength="5.89" lengthAdjust="spacingAndGlyphs">-</text><text x="228.47" y="592.60" textLength="11.14" lengthAdjust="spacingAndGlyphs">A</text><text x="239.61" y="592.60" textLength="10.11" lengthAdjust="spacingAndGlyphs">d</text><text x="249.72" y="592.60" textLength="10.11" lengthAdjust="spacingAndGlyphs">d</text><text x="259.84" y="592.60" textLength="6.71" lengthAdjust="spacingAndGlyphs">r</text><text x="266.55" y="592.60" textLength="9.58" lengthAdjust="spacingAndGlyphs">e</text><text x="276.12" y="592.60" textLength="7.53" lengthAdjust="spacingAndGlyphs">s</text><text x="283.65" y="592.60" textLength="7.53" lengthAdjust="spacingAndGlyphs">s</text><text x="295.53" y="592.60" textLength="10.47" lengthAdjust="spacingAndGlyphs">B</text><text x="306.01" y="592.60" textLength="9.40" lengthAdjust="spacingAndGlyphs">E</text><text x="315.41" y="592.60" textLength="8.09" lengthAdjust="spacingAndGlyphs">L</text><text x="323.50" y="592.60" textLength="12.75" lengthAdjust="spacingAndGlyphs">O</text><text x="336.24" y="592.60" textLength="12.43" lengthAdjust="spacingAndGlyphs">N</text><text x="348.67" y="592.60" textLength="12.14" lengthAdjust="spacingAndGlyphs">G</text><text x="360.81" y="592.60" textLength="8.84" lengthAdjust="spacingAndGlyphs">S</text><text x="369.66" y="592.60" textLength="9.63" lengthAdjust="spacingAndGlyphs">_</text><text x="379.28" y="592.60" textLength="9.38" lengthAdjust="spacingAndGlyphs">T</text><text x="388.66" y="592.60" textLength="12.75" lengthAdjust="spacingAndGlyphs">O</text><text x="401.41" y="592.60" textLength="9.63" lengthAdjust="spacingAndGlyphs">_</text><text x="411.04" y="592.60" textLength="12.14" lengthAdjust="spacingAndGlyphs">G</text><text x="423.18" y="592.60" textLength="10.45" lengthAdjust="spacingAndGlyphs">R</text><text x="433.63" y="592.60" textLength="12.75" lengthAdjust="spacingAndGlyphs">O</text><text x="446.38" y="592.60" textLength="12.35" lengthAdjust="spacingAndGlyphs">U</text><text x="458.73" y="592.60" textLength="9.94" lengthAdjust="spacingAndGlyphs">P</text><text x="473.02" y="592.60" textLength="10.45" lengthAdjust="spacingAndGlyphs">R</text><text x="483.48" y="592.60" textLength="9.58" lengthAdjust="spacingAndGlyphs">e</text><text x="493.05" y="592.60" textLength="15.38" lengthAdjust="spacingAndGlyphs">m</text><text x="508.43" y="592.60" textLength="10.15" lengthAdjust="spacingAndGlyphs">o</text><text x="518.58" y="592.60" textLength="6.45" lengthAdjust="spacingAndGlyphs">t</text><text x="525.03" y="592.60" textLength="9.58" lengthAdjust="spacingAndGlyphs">e</text><text x="538.96" y="592.60" textLength="12.43" lengthAdjust="spacingAndGlyphs">N</text><text x="551.39" y="592.60" textLength="11.14" lengthAdjust="spacingAndGlyphs">A</text><text x="562.53" y="592.60" textLength="11.84" lengthAdjust="spacingAndGlyphs">D</text><text x="574.37" y="592.60" textLength="5.84" lengthAdjust="spacingAndGlyphs">)</text></g>
<g id="r1" font-size="17" fill="#000000"><text x="747.58" y="295.70" textLength="9.40" lengthAdjust="spacingAndGlyphs">E</text><text x="756.99" y="295.70" textLength="8.34" lengthAdjust="spacingAndGlyphs">x</text><text x="765.33" y="295.70" textLength="9.58" lengthAdjust="spacingAndGlyphs">e</text><text x="774.91" y="295.70" textLength="8.14" lengthAdjust="spacingAndGlyphs">c</text><text x="783.05" y="295.70" textLength="10.12" lengthAdjust="spacingAndGlyphs">u</text><text x="793.17" y="295.70" textLength="6.45" lengthAdjust="spacingAndGlyphs">t</text><text x="799.62" y="295.70" textLength="4.42" lengthAdjust="spacingAndGlyphs">i</text><text x="804.04" y="295.70" textLength="8.70" lengthAdjust="spacingAndGlyphs">v</text><text x="812.74" y="295.70" textLength="9.58" lengthAdjust="spacingAndGlyphs">e</text></g>
<g id="r2" font-size="17" fill="#000000"><text x="748.58" y="350.60" textLength="10.74" lengthAdjust="spacingAndGlyphs">V</text><text x="759.32" y="350.60" textLength="9.42" lengthAdjust="spacingAndGlyphs">e</text><text x="768.74" y="350.60" textLength="9.94" lengthAdjust="spacingAndGlyphs">n</text><text x="778.68" y="350.60" textLength="9.94" lengthAdjust="spacingAndGlyphs">d</text><text x="788.62" y="350.60" textLength="9.98" lengthAdjust="spacingAndGlyphs">o</text><text x="798.60" y="350.60" textLength="6.60" lengthAdjust="spacingAndGlyphs">r</text></g>
<g id="r3" font-size="17" fill="#000000"><text x="747.60" y="377.90" textLength="4.42" lengthAdjust="spacingAndGlyphs">i</text><text x="752.02" y="377.90" textLength="12.75" lengthAdjust="spacingAndGlyphs">O</text><text x="764.77" y="377.90" textLength="8.85" lengthAdjust="spacingAndGlyphs">S</text><text x="777.96" y="377.90" textLength="11.84" lengthAdjust="spacingAndGlyphs">D</text><text x="789.81" y="377.90" textLength="9.58" lengthAdjust="spacingAndGlyphs">e</text><text x="799.39" y="377.90" textLength="8.70" lengthAdjust="spacingAndGlyphs">v</text><text x="808.08" y="377.90" textLength="4.42" lengthAdjust="spacingAndGlyphs">i</text><text x="812.50" y="377.90" textLength="8.14" lengthAdjust="spacingAndGlyphs">c</text><text x="820.64" y="377.90" textLength="9.58" lengthAdjust="spacingAndGlyphs">e</text></g>
<g id="r4" font-size="17" fill="#000000"><text x="747.69" y="434.80" textLength="12.00" lengthAdjust="spacingAndGlyphs">H</text><text x="759.69" y="434.80" textLength="10.46" lengthAdjust="spacingAndGlyphs">R</text><text x="774.50" y="434.80" textLength="8.10" lengthAdjust="spacingAndGlyphs">L</text><text x="782.59" y="434.80" textLength="10.16" lengthAdjust="spacingAndGlyphs">o</text><text x="792.75" y="434.80" textLength="8.14" lengthAdjust="spacingAndGlyphs">c</text><text x="800.89" y="434.80" textLength="9.22" lengthAdjust="spacingAndGlyphs">a</text><text x="810.12" y="434.80" textLength="4.42" lengthAdjust="spacingAndGlyphs">l</text></g>
<g id="r5" font-size="17" fill="#000000"><text x="747.67" y="511.70" textLength="8.10" lengthAdjust="spacingAndGlyphs">L</text><text x="755.77" y="511.70" textLength="4.42" lengthAdjust="spacingAndGlyphs">i</text><text x="760.19" y="511.70" textLength="10.12" lengthAdjust="spacingAndGlyphs">n</text><text x="770.31" y="511.70" textLength="10.12" lengthAdjust="spacingAndGlyphs">u</text><text x="780.43" y="511.70" textLength="8.34" lengthAdjust="spacingAndGlyphs">x</text><text x="793.13" y="511.70" textLength="12.36" lengthAdjust="spacingAndGlyphs">U</text><text x="805.49" y="511.70" textLength="7.53" lengthAdjust="spacingAndGlyphs">s</text><text x="813.02" y="511.70" textLength="9.58" lengthAdjust="spacingAndGlyphs">e</text><text x="822.61" y="511.70" textLength="6.72" lengthAdjust="spacingAndGlyphs">r</text></g>
<g id="r6" font-size="17" fill="#000000"><text x="747.69" y="592.90" textLength="10.45" lengthAdjust="spacingAndGlyphs">R</text><text x="758.15" y="592.90" textLength="9.58" lengthAdjust="spacingAndGlyphs">e</text><text x="767.72" y="592.90" textLength="15.38" lengthAdjust="spacingAndGlyphs">m</text><text x="783.10" y="592.90" textLength="10.15" lengthAdjust="spacingAndGlyphs">o</text><text x="793.26" y="592.90" textLength="6.45" lengthAdjust="spacingAndGlyphs">t</text><text x="799.71" y="592.90" textLength="9.58" lengthAdjust="spacingAndGlyphs">e</text><text x="813.64" y="592.90" textLength="9.40" lengthAdjust="spacingAndGlyphs">E</text><text x="823.04" y="592.90" textLength="15.38" lengthAdjust="spacingAndGlyphs">m</text><text x="838.42" y="592.90" textLength="10.12" lengthAdjust="spacingAndGlyphs">p</text><text x="848.53" y="592.90" textLength="4.42" lengthAdjust="spacingAndGlyphs">l</text><text x="852.95" y="592.90" textLength="10.15" lengthAdjust="spacingAndGlyphs">o</text><text x="863.11" y="592.90" textLength="8.71" lengthAdjust="spacingAndGlyphs">y</text><text x="871.82" y="592.90" textLength="9.58" lengthAdjust="spacingAndGlyphs">e</text><text x="881.40" y="592.90" textLength="9.58" lengthAdjust="spacingAndGlyphs">e</text></g>
</svg>
</body></html>
